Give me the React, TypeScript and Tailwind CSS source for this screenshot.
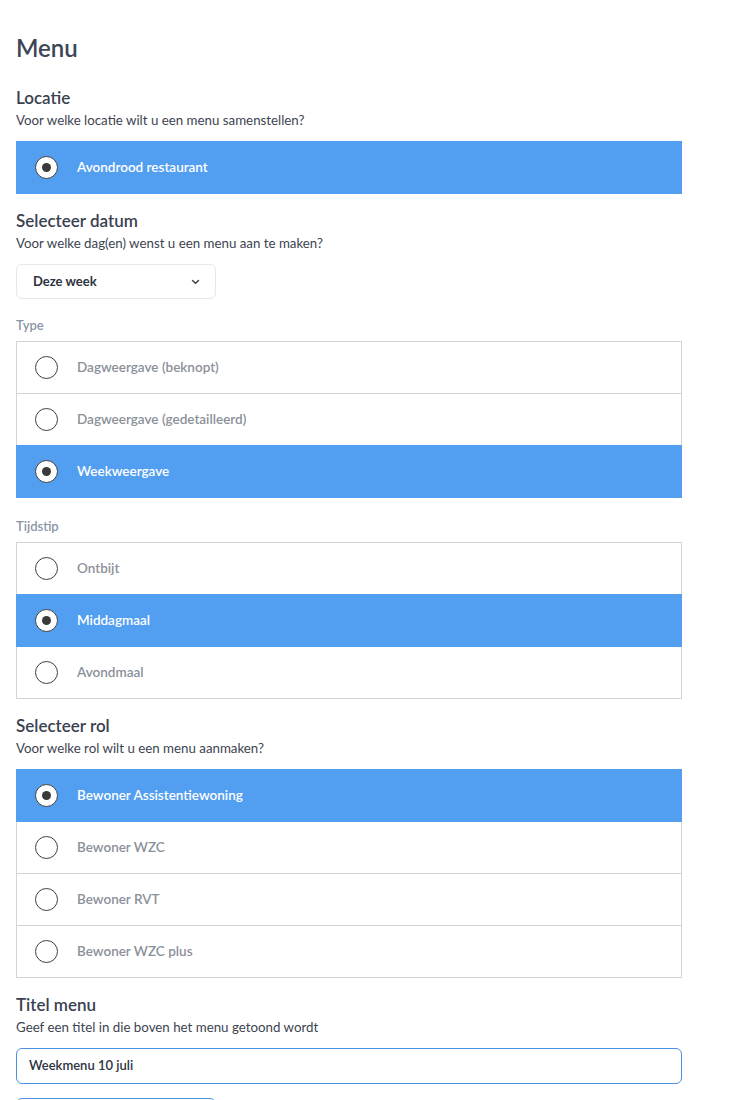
import React from "react";

const font = { fontFamily: "Lato, 'Noto Sans', sans-serif" };

function Radio({ checked }: { checked: boolean }) {
  return (
    <span className="flex h-[23px] w-[23px] shrink-0 items-center justify-center rounded-full border border-[#3f3f3f] bg-white">
      {checked && <span className="h-[9px] w-[9px] rounded-full bg-[#3a3a3a]" />}
    </span>
  );
}

function Options({ items, selected }: { items: string[]; selected: number }) {
  return (
    <div className="flex w-[666px] flex-col">
      {items.map((it, i) => {
        const on = i === selected;
        return (
          <div
            key={it}
            className={
              on
                ? "relative z-10 -mt-px flex h-[53px] items-center gap-[19px] border border-[#529ef0] bg-[#529ef0] pl-[18px] first:mt-0"
                : "-mt-px flex h-[53px] items-center gap-[19px] border border-[#d4d4d8] bg-white pl-[18px] first:mt-0"
            }
          >
            <Radio checked={on} />
            <span
              className={
                on
                  ? "text-[13.5px] font-semibold text-white"
                  : "text-[13.5px] font-semibold text-[#8b9099]"
              }
            >
              {it}
            </span>
          </div>
        );
      })}
    </div>
  );
}

function Heading({ title, sub }: { title: string; sub: string }) {
  return (
    <div className="flex flex-col">
      <h2 className="text-[17px] font-semibold leading-[24px] text-[#394150]">{title}</h2>
      <p className="text-[13.3px] leading-[20px] text-[#3d4451]">{sub}</p>
    </div>
  );
}

export default function App() {
  return (
    <div className="min-h-[1100px] bg-white px-4 pt-8" style={font}>
      <h1 className="text-[24px] font-semibold leading-[32px] text-[#3c4657]">Menu</h1>

      <div className="mt-[22px]">
        <Heading title="Locatie" sub="Voor welke locatie wilt u een menu samenstellen?" />
      </div>
      <div className="mt-[11px]">
        <Options items={["Avondrood restaurant"]} selected={0} />
      </div>

      <div className="mt-[15px]">
        <Heading title="Selecteer datum" sub="Voor welke dag(en) wenst u een menu aan te maken?" />
      </div>
      <div className="mt-[11px] flex h-[35px] w-[200px] items-center justify-between rounded-md border border-[#e5e7eb] bg-white pl-4 pr-[15px]">
        <span className="text-[13px] font-bold text-[#2d3340]">Deze week</span>
        <svg width="9" height="6" viewBox="0 0 9 6" fill="none">
          <path d="M1.5 1.5 L4.5 4.2 L7.5 1.5" stroke="#3a3f4a" strokeWidth="1.4" strokeLinecap="round" />
        </svg>
      </div>

      <p className="mt-[16px] text-[13px] font-semibold leading-[20px] text-[#8a95a5]">Type</p>
      <div className="mt-[6px]">
        <Options
          items={["Dagweergave (beknopt)", "Dagweergave (gedetailleerd)", "Weekweergave"]}
          selected={2}
        />
      </div>

      <p className="mt-[18px] text-[13px] font-semibold leading-[20px] text-[#8a95a5]">Tijdstip</p>
      <div className="mt-[6px]">
        <Options items={["Ontbijt", "Middagmaal", "Avondmaal"]} selected={1} />
      </div>

      <div className="mt-[15px]">
        <Heading title="Selecteer rol" sub="Voor welke rol wilt u een menu aanmaken?" />
      </div>
      <div className="mt-[11px]">
        <Options
          items={["Bewoner Assistentiewoning", "Bewoner WZC", "Bewoner RVT", "Bewoner WZC plus"]}
          selected={0}
        />
      </div>

      <div className="mt-[15px]">
        <Heading title="Titel menu" sub="Geef een titel in die boven het menu getoond wordt" />
      </div>
      <div className="mt-[11px] flex h-[36px] w-[666px] items-center rounded-md border border-[#4a90e2] bg-white px-3">
        <span className="text-[13px] font-semibold text-[#2d3340]">Weekmenu 10 juli</span>
      </div>
      <div className="mt-[14px] h-[40px] w-[200px] rounded-md border border-[#4a90e2] bg-white" />
    </div>
  );
}
